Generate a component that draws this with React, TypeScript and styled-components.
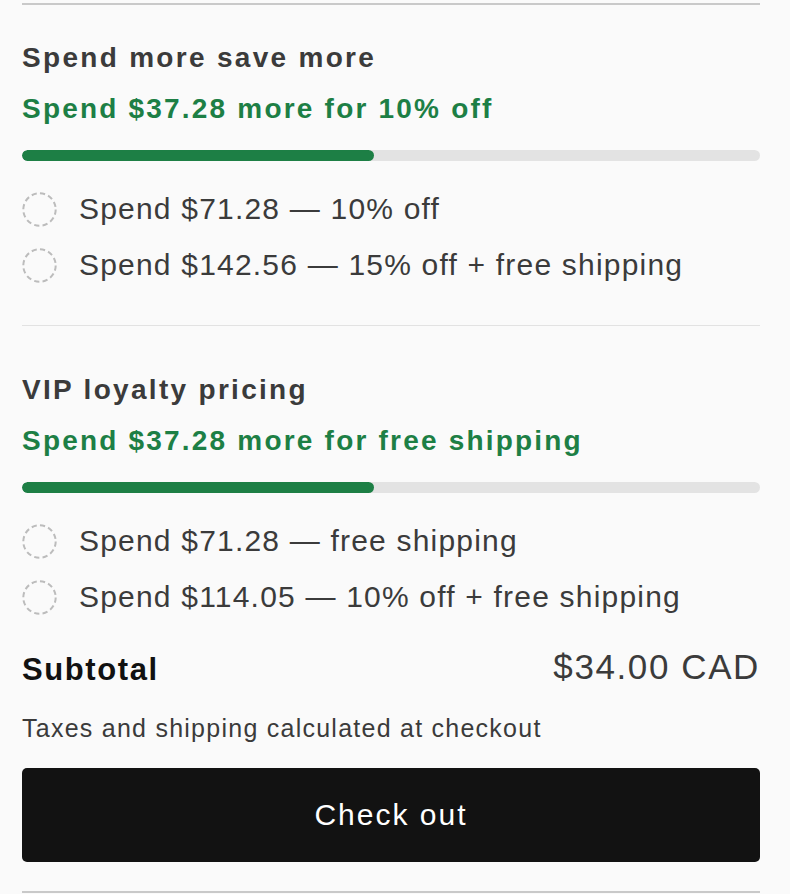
import React from 'react';
import styled, { createGlobalStyle } from 'styled-components';

const GlobalStyle = createGlobalStyle`
  html, body {
    margin: 0;
    padding: 0;
    background: #fafafa;
  }
  body {
    font-family: "Liberation Sans", Arial, Helvetica, sans-serif;
  }
`;

const Drawer = styled.div`
  width: 790px;
  height: 894px;
  box-sizing: border-box;
  padding: 0 30px 0 22px;
  display: flex;
  flex-direction: column;
  overflow: hidden;
`;

const TopRule = styled.div`
  margin-top: 3px;
  height: 2px;
  background: #c9c9c9;
`;

const Section = styled.section<{ $first?: boolean }>`
  padding: ${p => (p.$first ? '35px 0 43px' : '46px 0 0')};
  border-bottom: ${p => (p.$first ? '1px solid #e2e2e2' : 'none')};
`;

const Title = styled.h2`
  margin: 0;
  font-size: 28px;
  line-height: 36px;
  font-weight: 700;
  letter-spacing: 2.3px;
  color: #3b3b3b;
`;

const Goal = styled.p`
  margin: 15px 0 0;
  font-size: 28px;
  line-height: 36px;
  font-weight: 700;
  letter-spacing: 2.2px;
  color: #1d7f45;
`;

const Track = styled.div`
  margin-top: 23px;
  height: 11px;
  border-radius: 6px;
  background: #e3e3e3;
  overflow: hidden;
`;

const Fill = styled.div`
  height: 100%;
  border-radius: 6px;
  background: #1d7f45;
`;

const TierList = styled.ul`
  list-style: none;
  margin: 31px 0 0;
  padding: 0;
  display: flex;
  flex-direction: column;
  gap: 22px;
`;

const Tier = styled.li`
  display: flex;
  align-items: center;
  gap: 22px;
  height: 34px;
  font-size: 30px;
  letter-spacing: 1.2px;
  color: #3b3b3b;
  white-space: nowrap;
`;

const Ring = () => (
  <svg width="35" height="35" viewBox="0 0 35 35" style={{ flex: 'none' }}>
    <circle
      cx="17.5"
      cy="17.5"
      r="16.2"
      fill="none"
      stroke="#bcbcbc"
      strokeWidth="2"
      strokeDasharray="5.2 3.28"
    />
  </svg>
);

const Footer = styled.div`
  margin-top: 33px;
  display: flex;
  flex-direction: column;
`;

const TotalRow = styled.div`
  display: flex;
  justify-content: space-between;
  align-items: center;
  height: 40px;
`;

const TotalLabel = styled.span`
  font-size: 31px;
  font-weight: 700;
  letter-spacing: 1.6px;
  color: #111;
  margin-top: 6px;
`;

const TotalValue = styled.span`
  font-size: 35px;
  letter-spacing: 1.6px;
  color: #3b3b3b;
`;

const Note = styled.p`
  margin: 26px 0 0;
  font-size: 25px;
  line-height: 30px;
  letter-spacing: 1.25px;
  color: #3b3b3b;
`;

const CheckoutButton = styled.button`
  margin-top: 25px;
  height: 94px;
  border: none;
  border-radius: 5px;
  background: #121212;
  color: #fff;
  font-family: inherit;
  font-size: 30px;
  letter-spacing: 2px;
  cursor: pointer;
`;

const BottomRule = styled.div`
  margin-top: auto;
  margin-bottom: 1px;
  height: 2px;
  background: #c9c9c9;
`;

type Offer = {
  title: string;
  goal: string;
  progress: number;
  tiers: string[];
};

const offers: Offer[] = [
  {
    title: 'Spend more save more',
    goal: 'Spend $37.28 more for 10% off',
    progress: 47.7,
    tiers: ['Spend $71.28 — 10% off', 'Spend $142.56 — 15% off + free shipping'],
  },
  {
    title: 'VIP loyalty pricing',
    goal: 'Spend $37.28 more for free shipping',
    progress: 47.7,
    tiers: ['Spend $71.28 — free shipping', 'Spend $114.05 — 10% off + free shipping'],
  },
];

export default function App() {
  return (
    <>
      <GlobalStyle />
      <Drawer>
        <TopRule />
        {offers.map((o, i) => (
          <Section key={o.title} $first={i === 0}>
            <Title>{o.title}</Title>
            <Goal>{o.goal}</Goal>
            <Track>
              <Fill style={{ width: `${o.progress}%` }} />
            </Track>
            <TierList>
              {o.tiers.map(t => (
                <Tier key={t}>
                  <Ring />
                  {t}
                </Tier>
              ))}
            </TierList>
          </Section>
        ))}
        <Footer>
          <TotalRow>
            <TotalLabel>Subtotal</TotalLabel>
            <TotalValue>$34.00 CAD</TotalValue>
          </TotalRow>
          <Note>Taxes and shipping calculated at checkout</Note>
          <CheckoutButton>Check out</CheckoutButton>
        </Footer>
        <BottomRule />
      </Drawer>
    </>
  );
}
